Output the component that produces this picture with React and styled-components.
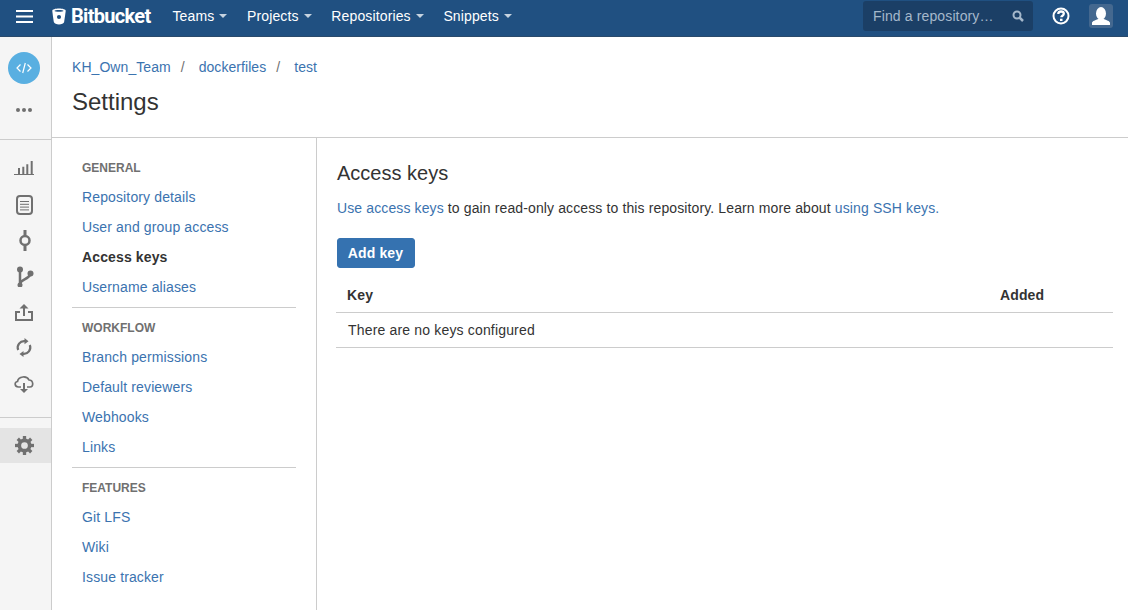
import React from 'react'
import styled, { createGlobalStyle } from 'styled-components'

const GlobalStyle = createGlobalStyle`
  html, body {
    margin: 0;
    height: 100%;
    background: #fff;
    color: #333;
    font-family: "Liberation Sans", Arial, sans-serif;
    font-size: 14px;
    line-height: 20px;
    letter-spacing: 0.13px;
  }
  * { box-sizing: border-box; }
  a { color: #3b73af; text-decoration: none; }
`

const Page = styled.div`
  height: 610px;
  overflow: hidden;
  display: flex;
  flex-direction: column;
`

const TopBar = styled.header`
  height: 37px;
  flex: none;
  display: flex;
  align-items: center;
  background: #205081;
  border-bottom: 1px solid #2a4a6b;
  padding: 0 0 4px 16px;
`

const Burger = styled.svg`
  width: 17px;
  height: 13px;
  flex: none;
  margin-right: 19px;
`

const Logo = styled.div`
  display: flex;
  align-items: center;
  gap: 5px;
  color: #fff;
  font-family: Roboto, sans-serif;
  font-weight: 700;
  font-size: 20px;
  letter-spacing: -0.7px;
  margin-right: 22px;
`

const NavMenu = styled.nav`
  display: flex;
  gap: 19.7px;
`

const NavItem = styled.a`
  color: #fff;
  display: flex;
  align-items: center;
  gap: 5px;
  &::after {
    content: '';
    border-left: 4px solid transparent;
    border-right: 4px solid transparent;
    border-top: 4px solid #c6d3e0;
  }
`

const TopRight = styled.div`
  margin-left: auto;
  display: flex;
  align-items: center;
  padding-right: 15px;
`

const Search = styled.div`
  width: 170px;
  height: 30px;
  border-radius: 3px;
  background: #1b3f66;
  color: #a5b8cb;
  display: flex;
  align-items: center;
  justify-content: space-between;
  padding: 0 9px 0 10px;
  margin-right: 19px;
`

const UserBox = styled.div`
  width: 24px;
  height: 24px;
  border-radius: 3px;
  background: #44688f;
  margin-left: 19px;
  overflow: hidden;
`

const Body = styled.div`
  flex: 1;
  display: flex;
  min-height: 0;
`

const SideRail = styled.aside`
  width: 52px;
  flex: none;
  background: #f5f5f5;
  border-right: 1px solid #ccc;
  display: flex;
  flex-direction: column;
`

const RailTop = styled.div`
  height: 103px;
  flex: none;
  border-bottom: 1px solid #ccc;
  display: flex;
  flex-direction: column;
  align-items: center;
  padding: 15px 3px 0 0;
  gap: 24px;
`

const RepoAvatar = styled.div`
  width: 32px;
  height: 32px;
  border-radius: 50%;
  background: #59afe1;
  display: flex;
  align-items: center;
  justify-content: center;
`

const RailIcons = styled.div`
  height: 278px;
  flex: none;
  border-bottom: 1px solid #ccc;
  padding-top: 10px;
  display: flex;
  flex-direction: column;
`

const RailIcon = styled.div`
  width: 100%;
  height: ${p => p.$h || 36}px;
  flex: none;
  display: flex;
  align-items: center;
  justify-content: center;
  padding-right: 3px;
  background: ${p => (p.$active ? '#e4e4e4' : 'transparent')};
`

const RailBottom = styled.div`
  padding-top: 10px;
`

const Content = styled.main`
  flex: 1;
  min-width: 0;
  display: flex;
  flex-direction: column;
`

const PageHead = styled.div`
  height: 101px;
  flex: none;
  border-bottom: 1px solid #ccc;
  padding: 20px 20px 0;
`

const Crumbs = styled.div`
  display: flex;
  color: #707070;
  letter-spacing: 0.06px;
`

const CrumbSep = styled.span`
  margin: 0 14px 0 10px;
`

const Title = styled.h1`
  margin: 10px 0 0;
  font-size: 24px;
  line-height: 30px;
  font-weight: 400;
  letter-spacing: 0;
  color: #333;
`

const Columns = styled.div`
  flex: 1;
  display: flex;
  min-height: 0;
`

const SettingsNav = styled.nav`
  width: 265px;
  flex: none;
  border-right: 1px solid #ccc;
  padding: 15px 20px 0;
`

const NavGroup = styled.div`
  padding: 0 0 5px;
  & + & {
    border-top: 1px solid #ccc;
    padding-top: 5px;
  }
`

const GroupTitle = styled.div`
  height: 29px;
  line-height: 28px;
  padding: 1px 0 0 10px;
  font-size: 12px;
  font-weight: 700;
  letter-spacing: 0;
  color: #707070;
`

const SideLink = styled.a`
  display: block;
  height: 30px;
  line-height: 30px;
  padding-left: 10px;
  color: ${p => (p.$current ? '#333' : '#3b73af')};
  font-weight: ${p => (p.$current ? 700 : 400)};
`

const Panel = styled.section`
  flex: 1;
  min-width: 0;
  padding: 21px 15px 0 20px;
`

const PanelTitle = styled.h2`
  margin: 0;
  font-size: 20px;
  line-height: 28px;
  font-weight: 400;
  letter-spacing: 0;
  color: #333;
`

const Lead = styled.p`
  margin: 11px 0 0;
  letter-spacing: 0.12px;
`

const AddButton = styled.button`
  display: block;
  margin-top: 20px;
  width: 78px;
  height: 30px;
  padding: 0 1px 0 0;
  border: 1px solid #3572b0;
  border-radius: 3.01px;
  background: #3572b0;
  color: #fff;
  font: 700 14px "Liberation Sans", Arial, sans-serif;
  letter-spacing: 0.13px;
`

const KeysTable = styled.table`
  width: 777px;
  margin: 10px 0 0 -1px;
  border-collapse: collapse;
  th, td {
    text-align: left;
    padding: 7px 10px;
    height: 35px;
    border-bottom: 1px solid #ccc;
    font-size: 14px;
  }
  th {
    height: 34px;
    font-weight: 700;
    color: #333;
  }
  th:first-child {
    padding-left: 11px;
  }
  th:last-child {
    width: 123px;
  }
  td {
    padding-left: 12px;
    letter-spacing: 0.17px;
  }
`

const Glyph = ({ children }) => (
  <svg width="22" height="22" viewBox="0 0 22 22" fill="none" stroke="#707070" strokeWidth="2">
    {children}
  </svg>
)

const gearTeeth = [0, 45, 90, 135, 180, 225, 270, 315]

const groups = [
  { title: 'GENERAL', links: ['Repository details', 'User and group access', 'Access keys', 'Username aliases'] },
  { title: 'WORKFLOW', links: ['Branch permissions', 'Default reviewers', 'Webhooks', 'Links'] },
  { title: 'FEATURES', links: ['Git LFS', 'Wiki', 'Issue tracker'] },
]

function App() {
  return (
    <Page>
      <GlobalStyle />
      <TopBar>
        <Burger viewBox="0 0 17 13">
          <path d="M0 1h17M0 6.5h17M0 12h17" stroke="#fff" strokeWidth="2" />
        </Burger>
        <Logo>
          <svg width="14" height="17" viewBox="0 0 15 17">
            <path fillRule="evenodd" fill="#fff" d="M7.5 0C3.6 0 .3 1 .3 2.400c0 .5 1.300 10.300 1.700 12 .3 1.400 3 2.600 5.500 2.600s5.200-1.200 5.500-2.600c.4-1.700 1.700-11.500 1.700-12C14.700 1 11.400 0 7.500 0zm0 1.600c2.600 0 4.800.4 4.800.9s-2.200.9-4.800.9-4.800-.4-4.800-.9 2.200-.9 4.800-.9zm0 5.200a2.200 2.200 0 1 1 0 4.400 2.200 2.200 0 0 1 0-4.400z" />
          </svg>
          Bitbucket
        </Logo>
        <NavMenu>
          <NavItem>Teams</NavItem>
          <NavItem>Projects</NavItem>
          <NavItem>Repositories</NavItem>
          <NavItem>Snippets</NavItem>
        </NavMenu>
        <TopRight>
          <Search>
            Find a repository…
            <svg width="12" height="12" viewBox="0 0 12 12" fill="none" stroke="#a5b8cb" strokeWidth="2">
              <circle cx="5" cy="5" r="3.5" />
              <path d="M7.500 7.500L11 11" strokeWidth="2.500" />
            </svg>
          </Search>
          <svg width="18" height="18" viewBox="0 0 18 18" fill="none">
            <circle cx="9" cy="9" r="7.500" stroke="#fff" strokeWidth="2" />
            <path d="M6.300 7c0-1.600 1.200-2.500 2.800-2.500S11.800 5.400 11.800 6.800c0 1.900-2.500 1.900-2.500 3.500" stroke="#fff" strokeWidth="2.300" />
            <rect x="8" y="11.700" width="2.500" height="2.300" fill="#fff" />
          </svg>
          <UserBox>
            <svg width="24" height="24" viewBox="0 0 24 24">
              <ellipse cx="12" cy="9.500" rx="5" ry="6.500" fill="#fff" />
              <path d="M3 21v-2c0-2 4-3 6-4h6c2 1 6 2 6 4v2z" fill="#fff" />
            </svg>
          </UserBox>
        </TopRight>
      </TopBar>
      <Body>
        <SideRail>
          <RailTop>
            <RepoAvatar>
              <svg width="16" height="12" viewBox="0 0 16 12" fill="none" stroke="#fff" strokeWidth="1.200">
                <path d="M4.500 2.500L1 6l3.500 3.500M11.500 2.500L15 6l-3.500 3.500M9.300 1L6.700 11" />
              </svg>
            </RepoAvatar>
            <svg width="16" height="4" viewBox="0 0 16 4" fill="#707070">
              <circle cx="2" cy="2" r="2" />
              <circle cx="8" cy="2" r="2" />
              <circle cx="14" cy="2" r="2" />
            </svg>
          </RailTop>
          <RailIcons>
            <RailIcon>
              <Glyph>
                <path strokeWidth="1" d="M1 17.500h20" />
                <path strokeWidth="2" d="M6 17v-6M10.300 17V9.700M14.300 17V7.300M18.700 17V4" />
              </Glyph>
            </RailIcon>
            <RailIcon>
              <Glyph>
                <rect x="4" y="3" width="15" height="18" rx="3" />
                <path strokeWidth="1" d="M7 8.500h9M7 11.300h9M7 14.100h9M7 16.900h9" />
              </Glyph>
            </RailIcon>
            <RailIcon>
              <Glyph>
                <circle cx="12" cy="11.500" r="4.500" strokeWidth="2.500" />
                <path strokeWidth="3" d="M12 1v5M12 17v5" />
              </Glyph>
            </RailIcon>
            <RailIcon>
              <Glyph>
                <circle cx="7" cy="4.500" r="3" fill="#707070" stroke="none" />
                <circle cx="7" cy="20" r="2.500" fill="#707070" stroke="none" />
                <circle cx="17.500" cy="8.500" r="3" fill="#707070" stroke="none" />
                <path strokeWidth="2.500" d="M7 5v15M7 19c1-5 8-4 10.500-10" />
              </Glyph>
            </RailIcon>
            <RailIcon>
              <Glyph>
                <path d="M7 11H3v8h16v-8h-4" />
                <path strokeWidth="2" d="M11 15V7" />
                <path fill="#707070" stroke="none" d="M11 3l4.500 4.500h-9z" />
              </Glyph>
            </RailIcon>
            <RailIcon>
              <Glyph>
                <path strokeWidth="2.200" d="M5.200 13A6.500 6.500 0 0 1 12 4.100M16.800 8A6.500 6.500 0 0 1 10 16.900" />
                <path fill="#707070" stroke="none" d="M11.500 1l4 3.200-4 3zM10.500 14l-4 3 4 3z" />
              </Glyph>
            </RailIcon>
            <RailIcon>
              <Glyph>
                <path strokeWidth="1.700" d="M8 14H5.500C1.500 14 1 9 4.500 8.500 5.500 3 14 2.500 16 7c4.500 0 5 7 1 7h-3" />
                <path strokeWidth="2" d="M11 10v6" />
                <path fill="#707070" stroke="none" d="M7 16h8l-4 4z" />
              </Glyph>
            </RailIcon>
          </RailIcons>
          <RailBottom>
            <RailIcon $active $h={35}>
              <svg width="19" height="19" viewBox="0 0 24 24" fill="none" stroke="#707070">
                <circle cx="12" cy="12" r="6.500" strokeWidth="4.500" />
                {gearTeeth.map(a => (
                  <path key={a} d="M12 0v5" strokeWidth="4.200" transform={`rotate(${a} 12 12)`} />
                ))}
              </svg>
            </RailIcon>
          </RailBottom>
        </SideRail>
        <Content>
          <PageHead>
            <Crumbs>
              <a>KH_Own_Team</a>
              <CrumbSep>/</CrumbSep>
              <a>dockerfiles</a>
              <CrumbSep>/</CrumbSep>
              <a>test</a>
            </Crumbs>
            <Title>Settings</Title>
          </PageHead>
          <Columns>
            <SettingsNav>
              {groups.map(g => (
                <NavGroup key={g.title}>
                  <GroupTitle>{g.title}</GroupTitle>
                  {g.links.map(l => (
                    <SideLink key={l} $current={l === 'Access keys'}>{l}</SideLink>
                  ))}
                </NavGroup>
              ))}
            </SettingsNav>
            <Panel>
              <PanelTitle>Access keys</PanelTitle>
              <Lead>
                <a>Use access keys</a> to gain read-only access to this repository. Learn more about <a>using SSH keys.</a>
              </Lead>
              <AddButton>Add key</AddButton>
              <KeysTable>
                <thead>
                  <tr>
                    <th>Key</th>
                    <th>Added</th>
                  </tr>
                </thead>
                <tbody>
                  <tr>
                    <td colSpan="2">There are no keys configured</td>
                  </tr>
                </tbody>
              </KeysTable>
            </Panel>
          </Columns>
        </Content>
      </Body>
    </Page>
  )
}

export default App
